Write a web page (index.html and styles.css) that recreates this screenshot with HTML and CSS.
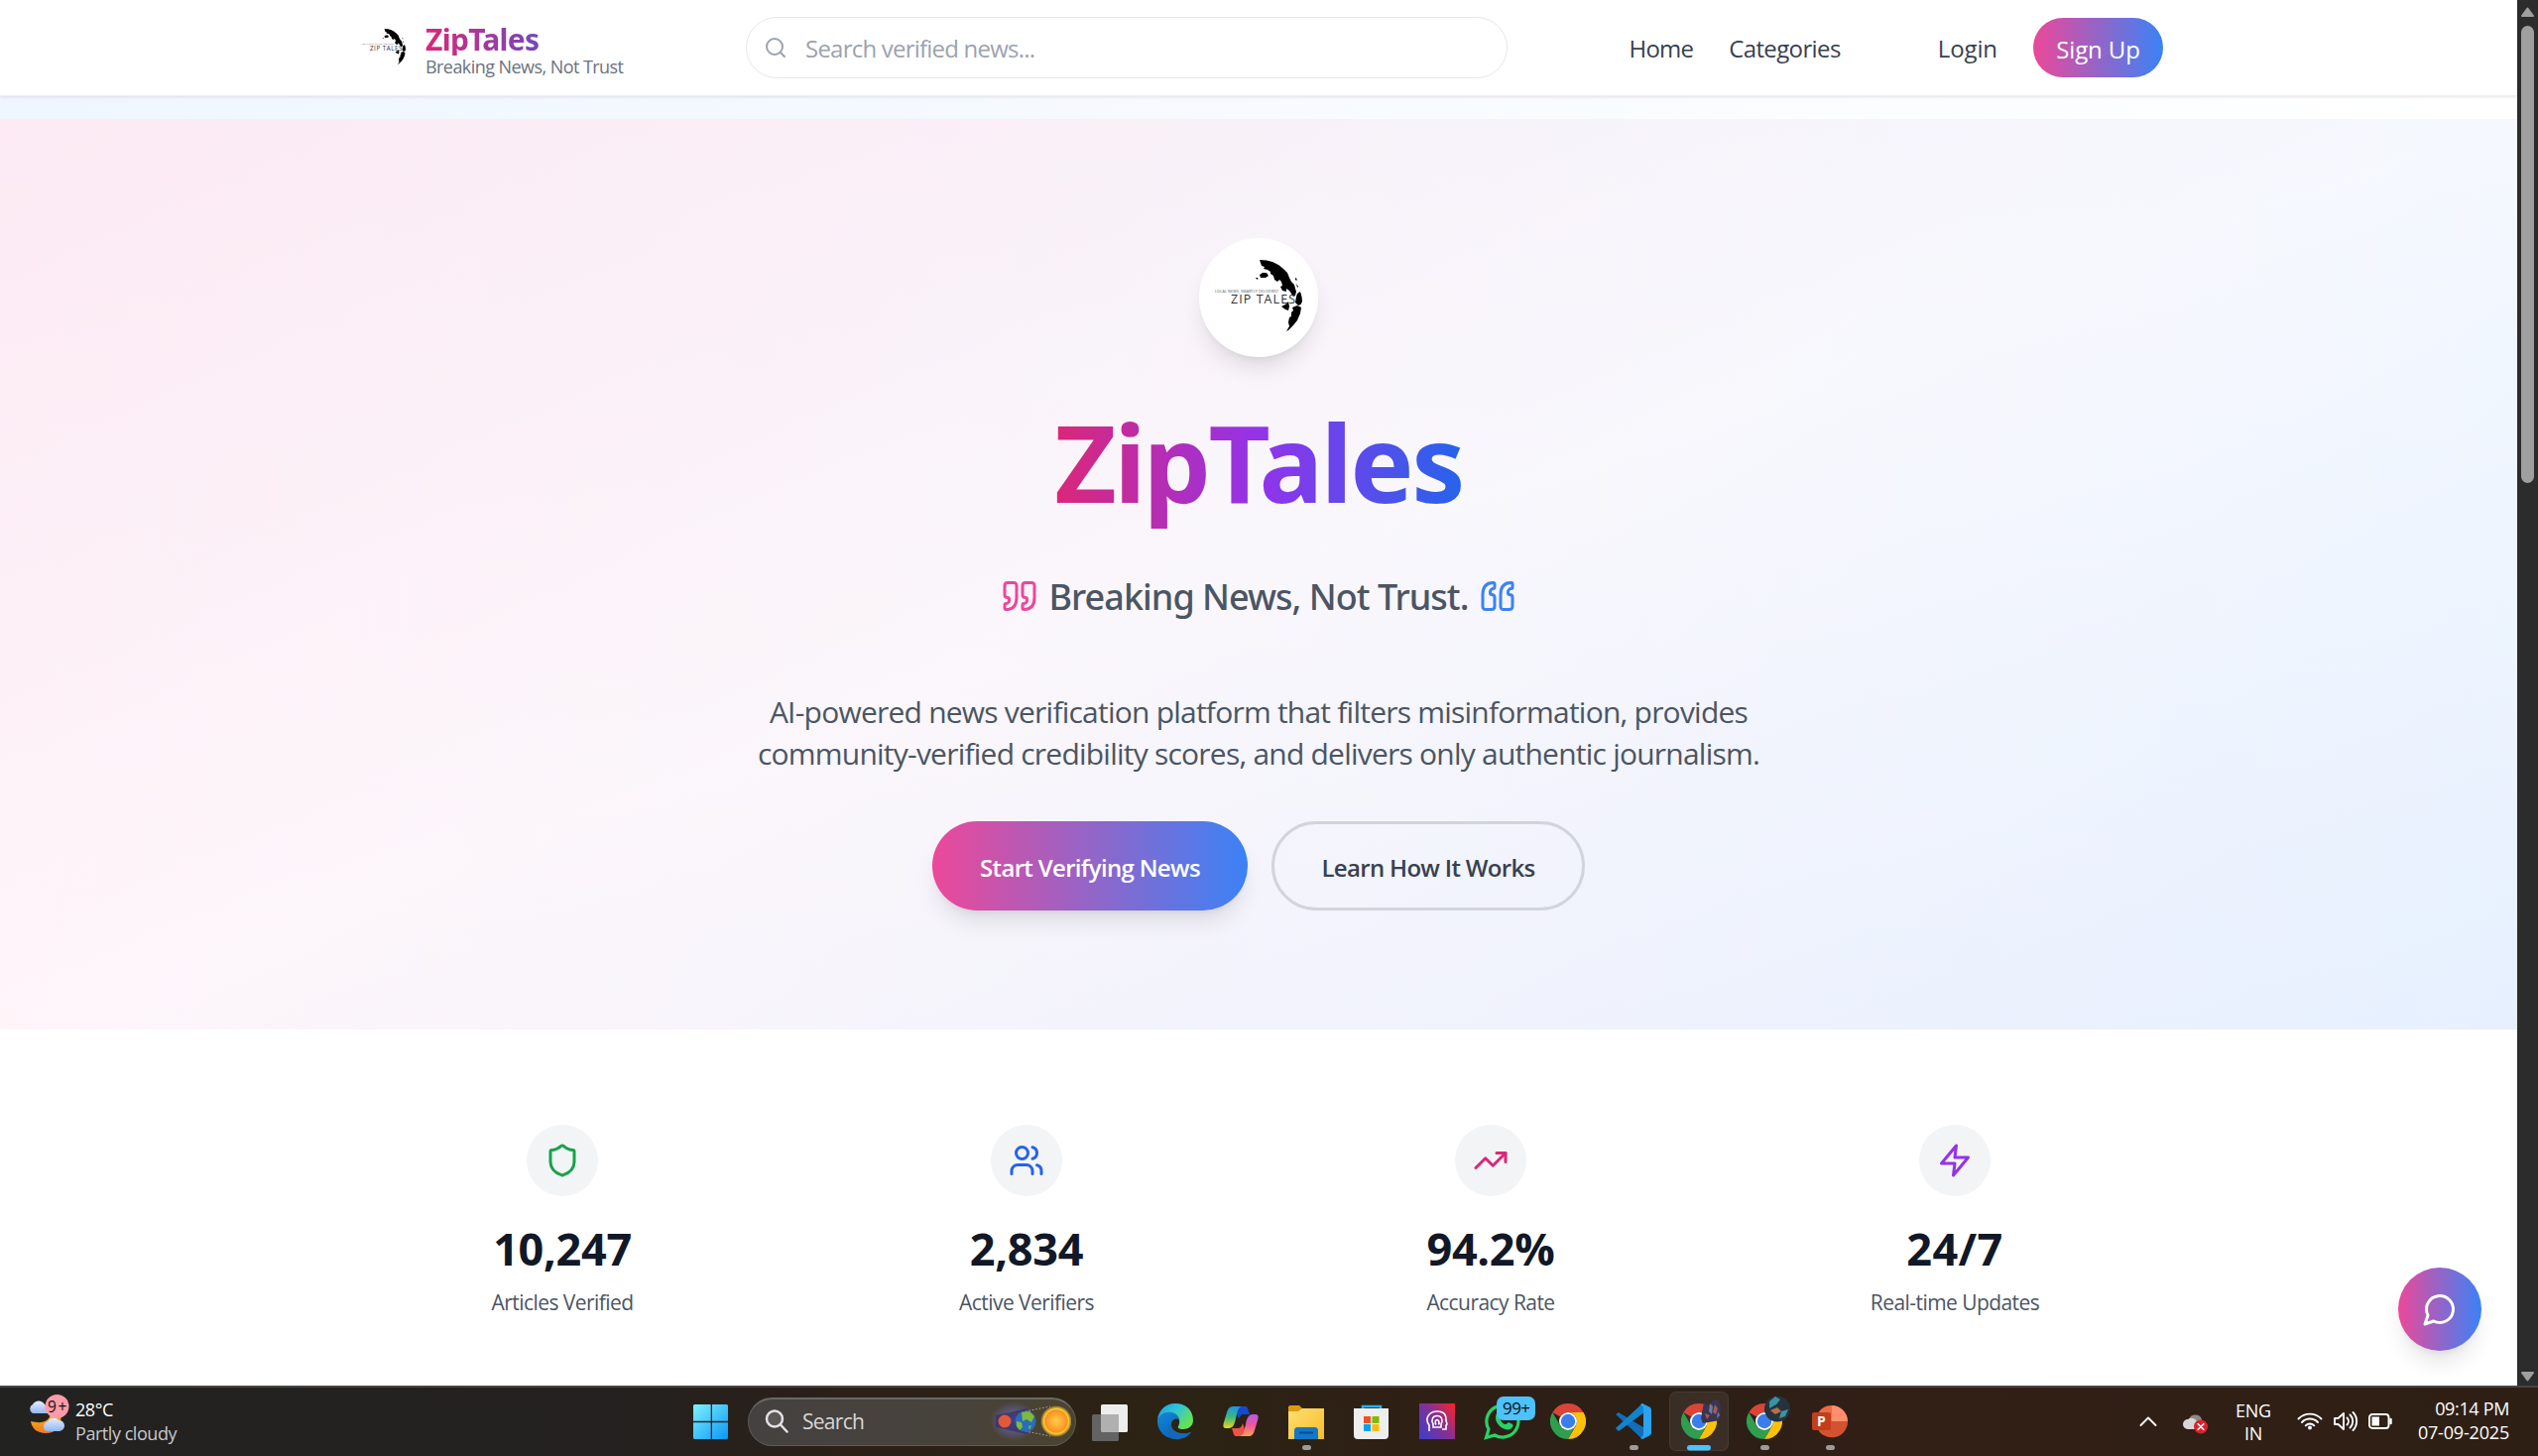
FILE: index.html
```html
<!DOCTYPE html>
<html lang="en">
<head>
<meta charset="utf-8">
<title>ZipTales</title>
<link rel="stylesheet" href="styles.css">
</head>
<body>
<svg class="defs" aria-hidden="true">
  <defs>
    <symbol id="logo" viewBox="0 0 120 120">
      <path d="M61 22l7 .6 6 1.400 6 3 5 4 4 4 2 5 2 4 3 3 1 4 1 3-1 4-2 1-2-3-2-3-3-2 0 3-4-1-2-4 2-1-1-4-2-2-2 2-3-2-1-4-3-2 0-2-3-2-4-1 1-2-3-1z"/>
      <path d="M61 37l3-2 4 0 2 3-3 2-5 0zM57 40l2 0 .6 1.500-1.600 0zM97 40l1.500 1 0 2-1.500-1zM98 46l2 3-1 1z"/>
      <path d="M98 59l1-3 3-2 1.500 5 .5 5-1.500 3-2.500 1-3-3zM83 69l4-2 3-3 1 5-1 4-3-1zM91 80l2-1 0-4 2-2-1-3 5-2 4 2-1 6-3 7-4 5-5 5-2 1 3-5-1-4z"/>
      <text x="32" y="65.500" font-size="12.500" textLength="65" lengthAdjust="spacing" fill="#333">ZIP TALES</text>
      <text x="16" y="54.500" font-size="3.700" textLength="64" fill="#555">LOCAL NEWS, SMARTLY DELIVERED</text>
    </symbol>
    <symbol id="quote" viewBox="0 0 24 24">
      <path d="M3 21c3 0 7-1 7-8V5c0-1.250-.756-2.017-2-2H4c-1.250 0-2 .75-2 1.972V11c0 1.250.75 2 2 2 1 0 1 0 1 1v1c0 1-1 2-2 2s-1 .008-1 1.031V20c0 1 0 1 1 1z"/>
      <path d="M15 21c3 0 7-1 7-8V5c0-1.250-.757-2.017-2-2h-4c-1.250 0-2 .75-2 1.972V11c0 1.250.75 2 2 2 1 0 1 0 1 1v1c0 1-1 2-2 2s-1 .008-1 1.031V20c0 1 0 1 1 1z"/>
    </symbol>
    <symbol id="chrome" viewBox="0 0 36 36">
      <path fill="#db4437" d="M18 0a18 18 0 0 1 15.600 9H18a9 9 0 0 0-7.800 4.500L2.400 9A18 18 0 0 1 18 0z"/>
      <path fill="#ffc107" d="M33.600 9A18 18 0 0 1 18 36l7.800-13.500A9 9 0 0 0 18 9z"/>
      <path fill="#2f9e4f" d="M2.400 9l7.800 13.500A9 9 0 0 0 25.800 22.500L18 36A18 18 0 0 1 2.400 9z"/>
      <circle cx="18" cy="18" r="9" fill="#fff"/><circle cx="18" cy="18" r="7.200" fill="#3b7ded"/>
    </symbol>
    <linearGradient id="win" x1="0" y1="0" x2="1" y2="1"><stop offset="0" stop-color="#7df3ff"/><stop offset="1" stop-color="#0a96f5"/></linearGradient>
    <linearGradient id="moon" x1="0" y1="0" x2="0" y2="1"><stop offset="0" stop-color="#fbb81c"/><stop offset="1" stop-color="#f07a22"/></linearGradient>
    <linearGradient id="cloud" x1="0" y1="0" x2="0" y2="1"><stop offset="0" stop-color="#e4efff"/><stop offset="1" stop-color="#92b6ee"/></linearGradient>
    <radialGradient id="sun"><stop offset="0" stop-color="#ffcf4a"/><stop offset=".72" stop-color="#fb8f22"/><stop offset=".8" stop-color="#ffd22e"/><stop offset="1" stop-color="#ffc52e" stop-opacity=".25"/></radialGradient>
    <radialGradient id="haze"><stop offset="0" stop-color="#6d6ac0"/><stop offset="1" stop-color="#6d6ac0" stop-opacity="0"/></radialGradient>
    <linearGradient id="edgeTop" x1="0" y1="0" x2="1" y2=".6"><stop offset="0" stop-color="#1b9de2"/><stop offset=".5" stop-color="#2fc5d8"/><stop offset="1" stop-color="#68e34d"/></linearGradient>
    <linearGradient id="edgeLow" x1="0" y1="0" x2="1" y2="1"><stop offset="0" stop-color="#1488d8"/><stop offset="1" stop-color="#0b55a8"/></linearGradient>
    <linearGradient id="copA" x1="0" y1="0" x2="0" y2="1"><stop offset="0" stop-color="#1795ee"/><stop offset=".5" stop-color="#3dbb76"/><stop offset="1" stop-color="#f3d321"/></linearGradient>
    <linearGradient id="copB" x1="0" y1="0" x2="0" y2="1"><stop offset="0" stop-color="#b25bea"/><stop offset=".5" stop-color="#f0559b"/><stop offset="1" stop-color="#ffa34d"/></linearGradient>
    <linearGradient id="folder" x1="0" y1="0" x2="1" y2="1"><stop offset="0" stop-color="#ffdf74"/><stop offset="1" stop-color="#f8bd26"/></linearGradient>
    <linearGradient id="head" x1="0" y1=".7" x2="1" y2="0"><stop offset="0" stop-color="#4a3cc0"/><stop offset=".5" stop-color="#8a3090"/><stop offset="1" stop-color="#ff2222"/></linearGradient>
  </defs>
</svg>

<div class="browser">
  <main class="page">
    <header class="header">
      <div class="container header-row">
        <div class="brand">
          <svg class="brand-logo"><use href="#logo"/></svg>
          <div class="brand-text">
            <div class="brand-name">ZipTales</div>
            <div class="brand-sub">Breaking News, Not Trust</div>
          </div>
        </div>
        <div class="search">
          <svg class="search-icon" viewBox="0 0 24 24"><circle cx="11" cy="11" r="8"/><path d="m21 21-4.300-4.300"/></svg>
          <span>Search verified news...</span>
        </div>
        <nav class="nav">
          <a class="nav-home">Home</a>
          <a class="nav-cat">Categories</a>
          <a class="nav-login">Login</a>
          <a class="signup">Sign Up</a>
        </nav>
      </div>
    </header>
    <div class="strip"></div>

    <section class="hero">
      <div class="hero-logo"><svg><use href="#logo"/></svg></div>
      <h1 class="hero-title">ZipTales</h1>
      <div class="tagline">
        <svg class="quote pink"><use href="#quote"/></svg>
        <span>Breaking News, Not Trust.</span>
        <svg class="quote blue"><use href="#quote"/></svg>
      </div>
      <p class="lead">AI-powered news verification platform that filters misinformation, provides<br>community-verified credibility scores, and delivers only authentic journalism.</p>
      <div class="actions">
        <a class="btn btn-primary">Start Verifying News</a>
        <a class="btn btn-outline">Learn How It Works</a>
      </div>
    </section>

    <section class="container stats">
      <div class="stat">
        <div class="stat-icon green"><svg viewBox="0 0 24 24"><path d="M20 13c0 5-3.500 7.500-7.660 8.950a1 1 0 0 1-.67-.01C7.500 20.500 4 18 4 13V6a1 1 0 0 1 1-1c2 0 4.500-1.200 6.240-2.720a1.170 1.170 0 0 1 1.520 0C14.510 3.810 17 5 19 5a1 1 0 0 1 1 1z"/></svg></div>
        <div class="stat-num">10,247</div><div class="stat-label">Articles Verified</div>
      </div>
      <div class="stat">
        <div class="stat-icon royal"><svg viewBox="0 0 24 24"><path d="M16 21v-2a4 4 0 0 0-4-4H6a4 4 0 0 0-4 4v2"/><circle cx="9" cy="7" r="4"/><path d="M22 21v-2a4 4 0 0 0-3-3.870M16 3.130a4 4 0 0 1 0 7.750"/></svg></div>
        <div class="stat-num">2,834</div><div class="stat-label">Active Verifiers</div>
      </div>
      <div class="stat">
        <div class="stat-icon rose"><svg viewBox="0 0 24 24"><path d="M22 7l-8.500 8.500-5-5L2 17"/><path d="M16 7h6v6"/></svg></div>
        <div class="stat-num">94.2%</div><div class="stat-label">Accuracy Rate</div>
      </div>
      <div class="stat">
        <div class="stat-icon purple"><svg viewBox="0 0 24 24"><path d="M13 2L3 14h9l-1 8 10-12h-9z"/></svg></div>
        <div class="stat-num wide">24/7</div><div class="stat-label">Real-time Updates</div>
      </div>
    </section>
    <div class="chat"><svg viewBox="0 0 24 24"><path d="M7.900 20A9 9 0 1 0 4 16.100L2 22Z"/></svg></div>
  </main>
  <aside class="scrollbar">
    <svg class="arrow" viewBox="0 0 21 16"><path d="M10.500 3.500l5.500 7.500H5z"/></svg>
    <div class="thumb"></div>
    <svg class="arrow" viewBox="0 0 21 16"><path d="M10.500 12.500L5 5h11z"/></svg>
  </aside>
</div>

<footer class="taskbar">
  <div class="weather">
    <svg viewBox="0 0 42 44">
      <path fill="url(#moon)" d="M33 19c2 13-4 20-15 20C9 39 4 34 3 27c12 3 19 0 20-8z"/>
      <path fill="url(#cloud)" d="M5 19a5 5 0 0 1 0-9A7 7 0 0 1 17 10l3 2v7z"/>
      <path fill="url(#cloud)" d="M19 37a5 5 0 0 1 1-9.500 6.500 6.500 0 0 1 11-1.500 5.500 5.500 0 0 1 1 11z"/>
      <circle cx="29.500" cy="12" r="12" fill="#ff9aa8"/>
      <text x="20" y="17.500" font-size="15.500" textLength="19" fill="#111">9+</text>
    </svg>
    <div><div>28°C</div><div class="dim">Partly cloudy</div></div>
  </div>

  <div class="apps">
    <svg class="app" viewBox="0 0 60 60"><path fill="url(#win)" d="M13 13h16.700v16.700H12V14zM31 13h15l1 1v15.700H31zM12 31.200h17.700V48H13l-1-1zM31 31.200h16V47l-1 1H31z"/></svg>
    <div class="tb-search">
      <svg class="lens" viewBox="0 0 24 24"><circle cx="10" cy="9.500" r="8"/><path d="M16 15.500l6.500 7"/></svg>
      <span>Search</span>
      <svg class="eclipse" viewBox="0 0 84 44">
        <ellipse cx="26" cy="22" rx="24" ry="20" fill="url(#haze)"/>
        <path d="M8 16l32-7v26L8 28z" fill="#35306b" opacity=".75"/>
        <path d="M38 12l25-5M38 32l25 5" stroke="#aaa" stroke-dasharray="1.500 2"/>
        <circle cx="17" cy="22" r="6.500" fill="#e2583a"/>
        <circle cx="38" cy="22" r="10.500" fill="#2a6cba"/>
        <path d="M34 13l8-1 5 5-3 6-5-3-4 2zM29 22l5 1 1 5-3 3-3-4zM41 27l3-1-2 5z" fill="#7dbb3c"/>
        <circle cx="69" cy="22" r="15.500" fill="url(#sun)"/>
      </svg>
    </div>
    <svg class="app" viewBox="0 0 60 60"><rect x="21" y="13" width="27" height="28" rx="1.500" fill="#ededed"/><rect x="12" y="23" width="27" height="27" rx="1.500" fill="#636363"/><path fill="#b0b0b0" d="M21 23h18v18H22l-1-1z"/></svg>
    <svg class="app" viewBox="0 0 60 60">
      <path fill="url(#edgeTop)" d="M12 29C13 19 20 12 30 12c11 0 18 7 18 17 0 6-5 9-10 9-4 0-6-1-5-3 2-3 2-9-3-12-6-3-15 0-18 6z"/>
      <path fill="url(#edgeLow)" d="M12 30c1-7 8-10 14-9 5 1 8 4 8 8-3-3-7-1-8 3-1 7 7 13 20 9-4 5-9 7-15 7-11 0-19-8-19-18z"/>
      <path fill="#1668b5" d="M26 32c-1 7 7 13 20 9-4 5-9 7-15 7-8-2-11-11-5-16z"/>
    </svg>
    <svg class="app" viewBox="0 0 60 60">
      <path fill="#1549d2" d="M24 15h10c3 0 3 2 4 5l1 3h-6c-3 0-4 2-5 5z"/>
      <path fill="#ef5148" d="M36 45H26c-3 0-3-2-4-5l-1-3h6c3 0 4-2 5-5z"/>
      <path fill="url(#copA)" d="M22 15h9c-4 1-4 5-6 12-1 6-3 10-7 10h-3c-3 0-3-3-2-6l3-10c1-4 3-6 6-6z"/>
      <path fill="url(#copB)" d="M38 45h-9c4-1 4-5 6-12 1-6 3-10 7-10h3c3 0 3 3 2 6l-3 10c-1 4-3 6-6 6z"/>
    </svg>
    <svg class="app" viewBox="0 0 60 60"><path fill="#dc9a10" d="M12 22v-7l2-1h9l3 3h6v8H12z"/><path fill="url(#folder)" d="M12 20h10l4-3h22v31H12z"/><path fill="#1277c8" d="M18 48V40c0-3 1-4 4-4h16c3 0 4 1 4 4v8z"/><path stroke="#0a4a94" stroke-width="2" d="M23 41.500h14"/><rect class="dot" x="26" y="54" width="9" height="5" rx="2.500"/></svg>
    <svg class="app" viewBox="0 0 60 60"><path d="M21 20v-5h18v5" fill="none" stroke="#27b0ee" stroke-width="2.500"/><path d="M12 17h35v27a4 4 0 0 1-4 4H16a4 4 0 0 1-4-4z" fill="#eee"/><path fill="#f25022" d="M22 25h7v7h-7z"/><path fill="#7fba00" d="M30.500 25h7v7h-7z"/><path fill="#00a4ef" d="M22 33h7v7h-7z"/><path fill="#ffb900" d="M30.500 33h7v7h-7z"/></svg>
    <svg class="app" viewBox="0 0 60 60"><path fill="url(#head)" d="M12 12h36v36H12z"/><path d="M22 40v-6c-5-7 0-14 8-14s9.500 5 9 9l1 4-1 1v4h-4M26 36h8v-3c2.500-4 .5-8.500-4-8.500s-6.500 4.500-4 8.500zM29 33.500c-2-3 0-5 1-5s3 2 1.500 5" fill="none" stroke="#fff" stroke-width="1.600"/></svg>
    <svg class="app" viewBox="0 0 60 60"><path d="M13.500 46.500l2.500-8.500A16 16 0 1 1 22 44z" fill="none" stroke="#25d366" stroke-width="3.200"/><path fill="#25d366" d="M24 22c2-2 3-1 4 2s-1 3 0 5 3 4 5 4 2-3 5-1c3 1 3 2 2 4-2 3-6 3-10 1-5-3-9-9-6-15z"/><rect x="24" y="5" width="39" height="24" rx="7" fill="#4cc2ff"/><text x="30" y="23" font-size="17" textLength="28" fill="#111">99+</text></svg>
    <svg class="app" viewBox="0 0 60 60"><use href="#chrome" x="12" y="12" width="36" height="36"/></svg>
    <svg class="app" viewBox="0 0 60 60"><path fill="#0f6fb8" d="M12 23l3-2 33 20-9 7z"/><path fill="#1184d0" d="M12 37l3 3 26-19-2-9z"/><path fill="#2aa3f0" d="M39 12l8 4 1 2v24l-1 2-8 4-2-1 3-3V16l-3-3z"/><rect class="dot" x="26" y="54" width="9" height="5" rx="2.500"/></svg>
    <svg class="app active" viewBox="0 0 60 60"><use href="#chrome" x="12" y="12" width="36" height="36"/><path fill="#3a3553" d="M35 11l5 4 4-7 6 1 2 7-1 13-17 3-2-5z"/><path fill="#a65b54" d="M46 13l3 4-2 6-3-2zM36 22l5 2-3 4z"/><path fill="#6c7da4" d="M41 12l3 3-1 8-3-3zM49 20l2 4-3 3z"/><rect x="18" y="54" width="24" height="5.500" rx="2.700" fill="#4cc2ff"/></svg>
    <svg class="app" viewBox="0 0 60 60"><use href="#chrome" x="12" y="12" width="36" height="36"/><circle cx="43" cy="17.500" r="13" fill="#26333b"/><path fill="#3b92a4" d="M35 10l6-5 5 3-4 5-7 4zM47 20l7-2-3 7-6 2z"/><path fill="#b47048" d="M36 19l7-3 4 4-6 3z"/><rect class="dot" x="26" y="54" width="9" height="5" rx="2.500"/></svg>
    <svg class="app" viewBox="0 0 60 60"><path fill="#ff8f6b" d="M32 14a16 16 0 0 1 16 16H32z"/><path fill="#ed6c47" d="M32 14v16l-8 14A16 16 0 0 1 32 14z"/><path fill="#d35230" d="M48 30a16 16 0 0 1-30 8l8-8z"/><rect x="12" y="21" width="19" height="18" rx="2" fill="#c43e1c"/><text x="17" y="35" font-size="14" font-weight="700" fill="#fff">P</text><rect class="dot" x="26" y="54" width="9" height="5" rx="2.500"/></svg>
  </div>

  <div class="tray">
    <svg class="t-up" viewBox="0 0 18 12"><path d="M1.500 10L9 2.500l7.500 7.500"/></svg>
    <svg class="t-cloud" viewBox="0 0 26 24"><path fill="#8d8a88" d="M6 8a7 7 0 0 1 13 0v8H6z"/><path fill="#d9d7d6" d="M5 18a5 5 0 0 1 0-10 6 6 0 0 1 9 2l4 8z"/><circle cx="18" cy="15.500" r="7" fill="#d8232f"/><path d="M15.200 12.700l5.600 5.600m0-5.600l-5.600 5.600" stroke="#fff" stroke-width="1.600"/></svg>
    <div class="lang"><div>ENG</div><div>IN</div></div>
    <svg class="t-wifi" viewBox="0 0 26 20"><path d="M1.500 7.500a16 16 0 0 1 23 0M5 11a11 11 0 0 1 16 0M8.700 14.300a6 6 0 0 1 8.600 0"/><circle cx="13" cy="16.500" r="2" fill="#fff" stroke="none"/></svg>
    <svg class="t-vol" viewBox="0 0 26 22"><path d="M2 8h3.500L11 3v16l-5.500-5H2zM14.500 7.500a5 5 0 0 1 0 7M17.500 4.500a9 9 0 0 1 0 13M20.500 2a13 13 0 0 1 0 18"/></svg>
    <svg class="t-bat" viewBox="0 0 26 18"><rect x="2" y="2" width="19.500" height="14" rx="3"/><rect x="4.500" y="4.500" width="7.500" height="9" fill="#fff" stroke="none"/><path d="M23.500 7v4" stroke-width="2.500"/></svg>
    <div class="clock"><div>09:14 PM</div><div class="date">07-09-2025</div></div>
  </div>
</footer>
</body>
</html>
```

FILE: styles.css
```css
* { box-sizing: border-box; }
body {
  margin: 0;
  width: 2559px;
  height: 1468px;
  overflow: hidden;
  display: flex;
  flex-direction: column;
  font-family: "Open Sans", "Noto Sans", sans-serif;
  color: #374151;
}
svg { display: block; flex: none; }
.defs { width: 0; height: 0; position: absolute; }

.browser { display: flex; height: 1397px; flex: none; }
.page { position: relative; width: 2538px; background: #fff; }
.container { width: 1824px; margin: 0 auto; }

/* Header */
.header {
  position: relative;
  height: 97px;
  background: #fff;
  border-bottom: 1px solid #fce7f3;
  box-shadow: 0 1px 3px rgba(0, 0, 0, .1);
}
.header-row { display: flex; align-items: center; height: 96px; }
.brand { display: flex; align-items: center; gap: 12px; width: 395px; }
.brand-logo { width: 60px; height: 60px; }
.brand-text { padding-top: 6px; }
.brand-name {
  width: max-content;
  padding-right: 84px;
  font: 700 30px/32px "Noto Sans", sans-serif;
  letter-spacing: -.72px;
  background: linear-gradient(90deg, #db2777, #2563eb);
  -webkit-background-clip: text;
  background-clip: text;
  color: transparent;
}
.brand-sub { font-size: 18px; line-height: 22px; letter-spacing: -.56px; color: #6b7280; white-space: nowrap; }
.search {
  display: flex;
  align-items: center;
  gap: 18px;
  width: 768px;
  height: 62px;
  padding-left: 17px;
  border: 1px solid #e5e7eb;
  border-radius: 31px;
  font-size: 24px;
  line-height: 36px;
  letter-spacing: -.78px;
  color: #9ca3af;
}
.search span { padding-top: 2px; }
.search-icon { width: 24px; height: 24px; fill: none; stroke: #9ca3af; stroke-width: 2; stroke-linecap: round; }
.nav { display: flex; align-items: center; margin-left: auto; font-size: 24px; line-height: 36px; }
.nav-home, .nav-cat, .nav-login { padding-top: 2px; }
.nav-home { letter-spacing: -.8px; margin-right: 36px; }
.nav-cat { letter-spacing: -.62px; margin-right: 98px; }
.nav-login { letter-spacing: -.1px; margin-right: 36px; }
.signup {
  width: 131px;
  height: 60px;
  line-height: 63px;
  border-radius: 30px;
  text-align: center;
  letter-spacing: -.1px;
  color: #fff;
  background: linear-gradient(90deg, #ec4899, #3b82f6);
}
.strip { height: 23px; background: linear-gradient(90deg, #eff6ff, #fff); }

/* Hero */
.hero {
  display: flex;
  flex-direction: column;
  align-items: center;
  height: 918px;
  padding-top: 120px;
  background:
    linear-gradient(90deg, rgba(236, 72, 153, .05), rgba(59, 130, 246, .05)),
    linear-gradient(to bottom right, #fdf2f8, #fff, #eff6ff);
}
.hero-logo {
  width: 120px;
  height: 120px;
  border-radius: 50%;
  background: #fff;
  box-shadow: 0 15px 22px -4px rgba(0, 0, 0, .1), 0 6px 9px -6px rgba(0, 0, 0, .1);
}
.hero-logo svg { width: 120px; height: 120px; }
.hero-title {
  margin: 52px 0 0;
  padding-bottom: 18px;
  font: 700 108px/108px "Noto Sans", sans-serif;
  letter-spacing: -2.59px;
  background: linear-gradient(90deg, #db2777, #9333ea, #2563eb);
  -webkit-background-clip: text;
  background-clip: text;
  color: transparent;
}
.tagline {
  display: flex;
  align-items: center;
  gap: 12px;
  height: 48px;
  margin-top: 40px;
  font: 500 36px/48px "Noto Sans", sans-serif;
  letter-spacing: -.98px;
  color: #4b5563;
}
.quote { width: 36px; height: 36px; margin-bottom: 2px; fill: none; stroke-width: 2; stroke-linecap: round; stroke-linejoin: round; }
.pink { stroke: #ec4899; }
.blue { stroke: #3b82f6; transform: rotate(180deg); }
.lead { margin: 71px 0 0; text-align: center; font-size: 30px; line-height: 42px; letter-spacing: -.775px; color: #4b5563; }
.actions { display: flex; gap: 24px; margin-top: 47px; }
.btn { height: 90px; line-height: 93px; border-radius: 45px; text-align: center; font-size: 24px; font-weight: 600; letter-spacing: -.68px; }
.btn-primary {
  width: 318px;
  color: #fff;
  background: linear-gradient(90deg, #ec4899, #3b82f6);
  box-shadow: 0 15px 22px -4px rgba(0, 0, 0, .1), 0 6px 9px -6px rgba(0, 0, 0, .1);
}
.btn-outline { width: 316px; line-height: 87px; border: 3px solid #d1d5db; color: #374151; }

/* Stats */
.stats { display: grid; grid-template-columns: repeat(4, 1fr); gap: 48px; padding-top: 96px; }
.stat { display: flex; flex-direction: column; align-items: center; }
.stat-icon { display: flex; align-items: center; justify-content: center; width: 72px; height: 72px; border-radius: 50%; background: #f3f4f6; }
.stat-icon svg { width: 36px; height: 36px; fill: none; stroke: currentColor; stroke-width: 2; stroke-linecap: round; stroke-linejoin: round; }
.green { color: #16a34a; }
.royal { color: #2563eb; }
.rose { color: #db2777; }
.purple { color: #9333ea; }
.stat-num { margin-top: 28px; font-size: 45px; font-weight: 700; line-height: 50px; letter-spacing: -.3px; color: #111827; }
.wide { letter-spacing: .45px; }
.stat-label { margin-top: 14px; font-size: 21px; line-height: 30px; letter-spacing: -.56px; color: #4b5563; }

.chat {
  position: absolute;
  left: 2418px;
  top: 1278px;
  width: 84px;
  height: 84px;
  padding: 24px;
  border-radius: 50%;
  background: linear-gradient(90deg, #ec4899, #3b82f6);
  box-shadow: 0 15px 22px -4px rgba(0, 0, 0, .1), 0 6px 9px -6px rgba(0, 0, 0, .1);
}
.chat svg { width: 36px; height: 36px; fill: none; stroke: #fff; stroke-width: 2; stroke-linejoin: round; }

.scrollbar { display: flex; flex-direction: column; align-items: center; width: 21px; padding: 5px 0 2px; background: #2c2c2c; }
.arrow { width: 21px; height: 16px; fill: #9f9f9f; stroke: #9f9f9f; stroke-width: 2; stroke-linejoin: round; }
.thumb { width: 13px; height: 461px; margin: 5px 0 auto; border-radius: 7px; background: #9f9f9f; }

/* Taskbar */
.taskbar {
  display: flex;
  height: 71px;
  border-top: 2px solid #474543;
  background: linear-gradient(90deg, #222221 0, #24211f 25%, #2d2017 34%, #2b2314 47%, #2f1f15 56%, #2b1f16 66%, #321f16 75%, #2e1f14 100%);
  color: #fff;
  font-size: 18px;
  line-height: 24px;
}
.weather { display: flex; width: 687px; padding: 7px 0 0 28px; letter-spacing: -.45px; }
.weather svg { width: 42px; height: 44px; margin-right: 6px; }
.weather > div { padding-top: 3px; }
.dim { color: #c8c8c8; }
.apps { display: flex; gap: 6px; padding-top: 4px; }
.app { width: 60px; height: 60px; overflow: visible; }
.active { border-radius: 7px; background: rgba(255, 255, 255, .07); box-shadow: inset 0 0 0 1px rgba(255, 255, 255, .06); }
.dot { fill: #9e9a97; }
.tb-search {
  display: flex;
  align-items: center;
  width: 331px;
  height: 49px;
  margin: 6px 0 0 1px;
  padding: 0 4px 2px 16px;
  border: 1px solid #5c5956;
  border-top: 2px solid #6b6864;
  border-radius: 25px;
  background: linear-gradient(90deg, #454140, #47423c 60%, #4a432f);
  font-size: 21px;
  letter-spacing: -.72px;
  color: #d9d7d3;
}
.tb-search + .app { margin-left: -2px; }
.lens { width: 24px; height: 24px; margin-right: 14px; fill: #5a5755; stroke: #e3e1e6; stroke-width: 2.500; stroke-linecap: round; }
.eclipse { width: 84px; height: 44px; margin-left: auto; fill: none; }
.tray { display: flex; margin-left: auto; padding-right: 29px; }
.tray svg { fill: none; stroke: #fff; stroke-width: 1.900; stroke-linecap: round; stroke-linejoin: round; }
.tray .t-up { width: 18px; height: 12px; margin: 28px 26px 0 0; }
.tray .t-cloud { width: 26px; height: 24px; margin: 24px 26px 0 0; stroke: none; }
.lang { width: 38px; margin: 12px 25px 0 0; padding-top: 0; text-align: center; line-height: 23px; letter-spacing: -.28px; }
.tray .t-wifi { width: 26px; height: 20px; margin: 24px 10px 0 0; }
.tray .t-vol { width: 26px; height: 22px; margin: 23px 9px 0 0; }
.tray .t-bat { width: 26px; height: 18px; margin: 25px 0 0; }
.clock { width: 117px; padding-top: 9px; text-align: right; letter-spacing: -.34px; }
.date { letter-spacing: -.18px; }
```
